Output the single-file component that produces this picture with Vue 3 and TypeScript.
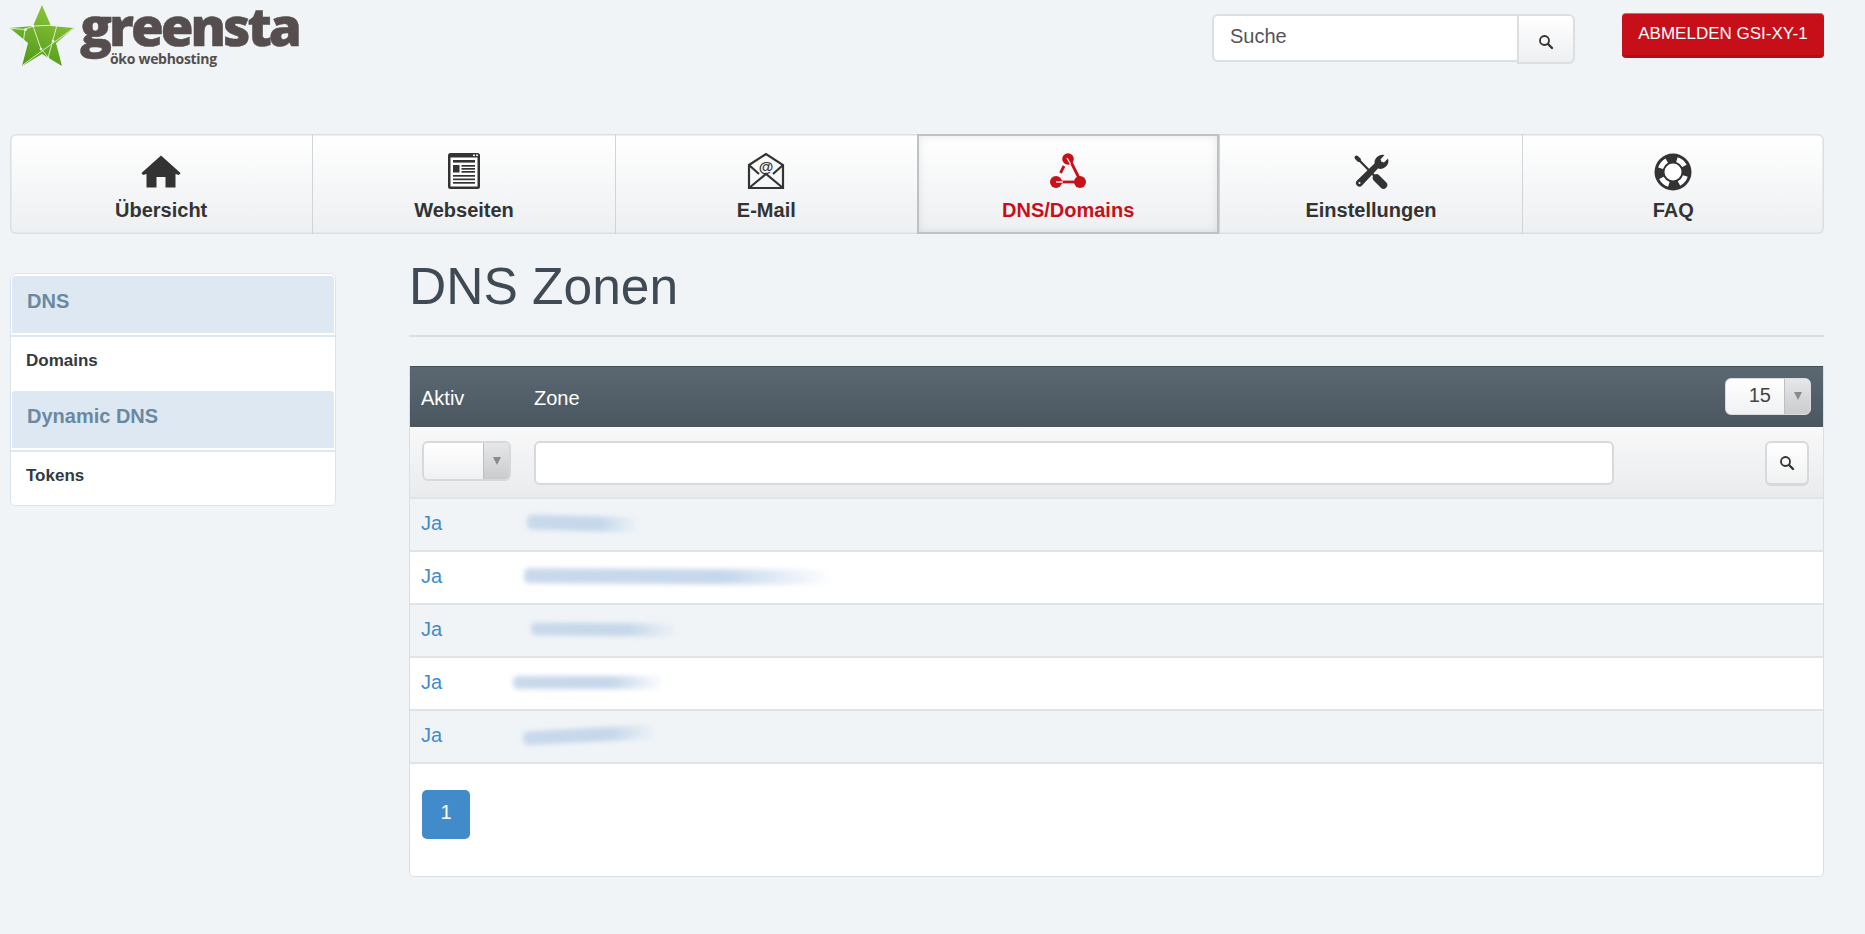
<script setup lang="ts">
const tabs = [
  { key: 'home', label: 'Übersicht' },
  { key: 'web', label: 'Webseiten' },
  { key: 'mail', label: 'E-Mail' },
  { key: 'dns', label: 'DNS/Domains', active: true },
  { key: 'tools', label: 'Einstellungen' },
  { key: 'faq', label: 'FAQ' },
]
const rows = [
  { left: -7, width: 112, height: 15, rot: 1.5 },
  { left: -10, width: 308, height: 15, rot: 0.3 },
  { left: -3, width: 148, height: 13, rot: 0.5 },
  { left: -21, width: 152, height: 13, rot: 0 },
  { left: -11, width: 134, height: 14, rot: -3 },
]
</script>

<template>
  <div class="page">
    <header class="topbar">
      <div class="logo">
        <svg class="star" width="64" height="62" viewBox="0 0 64 62">
          <defs>
            <linearGradient id="starfill" x1="0.7" y1="0" x2="0.3" y2="1">
              <stop offset="0" stop-color="#8fc63c" />
              <stop offset="1" stop-color="#4f9a18" />
            </linearGradient>
          </defs>
          <polygon points="32,0 41,21 64,23 46,38 52,61 32,49 12,61 18,38 0,23 23,21" fill="url(#starfill)" />
          <g stroke="#e8f3d8" stroke-width="0.9" fill="none">
            <path d="M1 23.5 L15 24.5 L23 21 L47 20" />
            <path d="M63 23.5 L12 60.5" />
            <path d="M23 21 L31 44 L45 60" />
            <path d="M15 24.5 L11 54" />
            <path d="M47 20 L38 53" />
          </g>
          <g fill="#fff">
            <circle cx="15.500" cy="24.500" r="1.300" />
            <circle cx="23" cy="21" r="1.300" />
            <circle cx="31" cy="44" r="1.300" />
            <circle cx="43" cy="36" r="1.300" />
          </g>
        </svg>
        <div class="wordmark">
          <div class="brand">greensta</div>
          <div class="tagline">öko webhosting</div>
        </div>
      </div>
      <div class="top-actions">
        <div class="search">
          <div class="search-input">Suche</div>
          <button class="search-btn">
            <svg width="16" height="16" viewBox="0 0 16 16"><circle cx="6.500" cy="6.500" r="4.500" fill="none" stroke="#333" stroke-width="1.800" /><path d="M10 10 L14 14" stroke="#333" stroke-width="2.400" stroke-linecap="round" /></svg>
          </button>
        </div>
        <button class="logout">ABMELDEN GSI-XY-1</button>
      </div>
    </header>

    <nav class="tabs">
      <a v-for="t in tabs" :key="t.key" class="tab" :class="{ active: t.active }">
        <svg class="tab-icon" width="40" height="40" viewBox="0 0 40 40">
          <template v-if="t.key === 'home'">
            <path d="M20 3.500 L39.500 21 L38 23 L34.500 22 V35.500 H24.500 V25 H15.500 V35.500 H5.500 V22 L2 23 L0.500 21 Z" fill="#333" />
          </template>
          <template v-else-if="t.key === 'web'">
            <rect x="4" y="1" width="32" height="36" rx="2.500" fill="#333" />
            <rect x="6.500" y="5.500" width="27" height="29" fill="#fff" />
            <circle cx="30" cy="3.300" r="1" fill="#fff" />
            <circle cx="33" cy="3.300" r="1" fill="#fff" />
            <g fill="#333">
              <rect x="9" y="8" width="22" height="2.600" />
              <rect x="9" y="13" width="6.500" height="7.500" />
              <rect x="17.500" y="13" width="13.500" height="1.700" />
              <rect x="17.500" y="16" width="13.500" height="1.700" />
              <rect x="17.500" y="19" width="13.500" height="1.700" />
              <rect x="9" y="23" width="22" height="1.700" />
              <rect x="9" y="26.500" width="22" height="1.700" />
              <rect x="9" y="30" width="22" height="1.700" />
            </g>
          </template>
          <template v-else-if="t.key === 'mail'">
            <g fill="none" stroke="#333" stroke-width="2.200">
              <path d="M3 13 L20 2 L37 13 V36 H3 Z" />
              <path d="M3 13 L13 22 M37 13 L27 22 M3 36 L20 22 L37 36" />
            </g>
            <text x="20" y="20" text-anchor="middle" class="at">@</text>
          </template>
          <template v-else-if="t.key === 'dns'">
            <g fill="none" stroke="#c8101a" stroke-width="2.800">
              <path d="M16 14 L12.500 21" />
              <path d="M23 10 L31 26" />
              <path d="M11 30 L30 30" />
            </g>
            <circle cx="20" cy="7" r="5.800" fill="#c8101a" />
            <circle cx="8" cy="30" r="6" fill="#c8101a" />
            <circle cx="32" cy="30" r="6" fill="#c8101a" />
            <path d="M19 6 L22.500 12" stroke="#fff" stroke-width="1.300" />
            <path d="M8 30 H15" stroke="#fff" stroke-width="1.300" />
          </template>
          <template v-else-if="t.key === 'tools'">
            <g fill="none" stroke="#333" stroke-linecap="round">
              <path d="M5.500 5.500 L8 8" stroke-width="4" />
              <path d="M8 8 L23.500 24" stroke-width="2.300" />
              <path d="M25.500 26 L32.500 33" stroke-width="7.500" />
            </g>
            <path d="M33.500 3 L29.500 7.500 L30.500 9.800 L33 10.500 L37 6.500 A8 8 0 0 1 27 16.500 L11 33.500 A3.500 3.500 0 0 1 6 28.500 L23.500 11.500 A8 8 0 0 1 33.500 3 Z" fill="#333" />
            <circle cx="8.500" cy="31" r="1" fill="#fff" />
          </template>
          <template v-else>
            <circle cx="20" cy="20" r="18.500" fill="#333" />
            <circle cx="20" cy="20" r="13" fill="none" stroke="#fff" stroke-width="5" stroke-dasharray="10 10.420" transform="rotate(-135 20 20) rotate(-28 20 20)" />
            <circle cx="20" cy="20" r="8.500" fill="#fff" />
          </template>
        </svg>
        <span class="tab-label">{{ t.label }}</span>
      </a>
    </nav>

    <div class="content">
      <aside class="sidebar">
        <div class="side-head">DNS</div>
        <div class="side-item">Domains</div>
        <div class="side-head">Dynamic DNS</div>
        <div class="side-item last">Tokens</div>
      </aside>

      <main class="main">
        <h1 class="title">DNS Zonen</h1>
        <section class="table">
          <div class="thead">
            <div class="col-a">Aktiv</div>
            <div class="col-b">Zone</div>
            <div class="select page-size">
              <span class="select-value">15</span>
              <span class="select-arrow"><i class="tri"></i></span>
            </div>
          </div>
          <div class="filter">
            <div class="col-a">
              <div class="select active-filter">
                <span class="select-value"></span>
                <span class="select-arrow"><i class="tri"></i></span>
              </div>
            </div>
            <div class="filter-input"></div>
            <button class="filter-btn">
              <svg width="16" height="16" viewBox="0 0 16 16"><circle cx="6.500" cy="6.500" r="4.500" fill="none" stroke="#333" stroke-width="1.800" /><path d="M10 10 L14 14" stroke="#333" stroke-width="2.400" stroke-linecap="round" /></svg>
            </button>
          </div>
          <div v-for="(r, i) in rows" :key="i" class="row" :class="{ odd: i % 2 === 0 }">
            <div class="col-a link">Ja</div>
            <div class="col-b">
              <span class="smear" :style="{ marginLeft: r.left + 'px', width: r.width + 'px', height: r.height + 'px', transform: `rotate(${r.rot}deg)` }"></span>
            </div>
          </div>
          <div class="pager">
            <span class="page-btn">1</span>
          </div>
        </section>
      </main>
    </div>
  </div>
</template>

<style>
html, body { background: #f0f4f7; margin: 0; }
</style>

<style scoped>
.page {
  padding: 0 41px 0 10px;
  font-family: "Liberation Sans", Arial, sans-serif;
  color: #333;
  box-sizing: border-box;
}
.topbar {
  height: 134px;
  display: flex;
  justify-content: space-between;
  align-items: flex-start;
}
.logo {
  display: flex;
  align-items: flex-start;
  padding-top: 5px;
  gap: 6px;
}
.wordmark { width: 240px; height: 64px; }
.brand {
  font-family: "Open Sans", sans-serif;
  font-weight: 800;
  font-size: 53px;
  line-height: 50px;
  letter-spacing: -3px;
  color: #564e4e;
  -webkit-text-stroke: 0.5px #564e4e;
  margin-top: -4px;
}
.tagline {
  font-family: "Open Sans", sans-serif;
  font-weight: 700;
  font-size: 14px;
  line-height: 16px;
  letter-spacing: -0.3px;
  color: #564e4e;
  margin: 0 0 0 30px;
}
.top-actions {
  display: flex;
  align-items: flex-start;
  gap: 47px;
  padding-top: 13px;
}
.search { display: flex; align-items: flex-start; margin-top: 1px; }
.search-input {
  width: 305px;
  height: 48px;
  box-sizing: border-box;
  padding: 7px 0 0 16px;
  background: #fff;
  border: 2px solid #dcdfe1;
  border-right: 0;
  border-radius: 6px 0 0 6px;
  font-size: 20px;
  line-height: 26px;
  color: #555;
}
.search-btn {
  width: 58px;
  height: 50px;
  box-sizing: border-box;
  padding: 8px 0 0;
  background: linear-gradient(#fff, #eeeff1);
  border: 2px solid #dcdfe1;
  border-radius: 0 6px 6px 0;
}
.logout {
  width: 202px;
  height: 45px;
  padding: 0 0 1px;
  background: #c60f19;
  border: 0;
  border-bottom: 3px solid #b30d16;
  border-top: 1px solid #e46068;
  border-radius: 4px;
  color: #fff;
  font-family: inherit;
  font-size: 17px;
  box-sizing: border-box;
}
.tabs {
  display: flex;
  height: 100px;
  box-sizing: border-box;
  background: linear-gradient(#fff, #edeff1);
  box-shadow: inset 0 0 0 1.500px #dcdfe1;
  border-radius: 6px;
}
.tab {
  flex: none;
  width: calc(100% / 6);
  box-sizing: border-box;
  display: flex;
  flex-direction: column;
  align-items: center;
  padding-top: 18px;
  border-left: 1px solid #d2d5d7;
  color: #333;
}
.tab:first-child { border-left: 0; }
.tab.active {
  border: 2px solid #bfc2c5;
  box-shadow: inset 0 0 10px rgba(0, 0, 0, 0.09);
  color: #c8101a;
  padding-top: 16px;
}
.tab-icon { display: block; }
.tab-label {
  font-size: 20px;
  font-weight: 700;
  line-height: 24px;
  margin-top: 6px;
}
.at { font: 700 15px "Liberation Sans", sans-serif; fill: #333; }
.content {
  display: flex;
  gap: 73px;
  margin-top: 39px;
  align-items: flex-start;
}
.sidebar {
  width: 326px;
  flex: none;
  box-sizing: border-box;
  background: #fff;
  border: 1px solid #d9e4f1;
  border-radius: 6px;
  overflow: hidden;
  padding-top: 2px;
}
.side-head {
  height: 57px;
  box-sizing: border-box;
  margin: 0 1px;
  padding: 13px 0 0 15px;
  background: #dee8f3;
  color: #6b88a1;
  font-size: 20px;
  font-weight: 700;
  line-height: 24px;
  border-radius: 3px 3px 0 0;
}
.side-item {
  height: 56px;
  box-sizing: border-box;
  margin-top: 2px;
  border-top: 2px solid #dee8f3;
  padding: 12px 0 0 15px;
  background: #fff;
  color: #33393f;
  font-size: 17px;
  font-weight: 700;
  line-height: 24px;
}
.side-item.last { height: 55px; }
.main { flex: 1; min-width: 0; }
.title {
  margin: 0;
  height: 62px;
  border-bottom: 2px solid #dcdfe1;
  font-size: 51.500px;
  font-weight: 400;
  line-height: 26px;
  color: #3f4a54;
}
.table {
  margin-top: 29px;
  background: #fff;
  border: 1px solid #dcdfe1;
  border-top: 0;
  border-radius: 0 0 5px 5px;
  height: 511px;
  box-sizing: border-box;
}
.thead {
  height: 62px;
  box-sizing: border-box;
  display: flex;
  align-items: center;
  background: linear-gradient(#5b6871, #4b5760);
  border-top: 1px solid #454f56;
  border-bottom: 1px solid #fff;
  color: #fff;
  font-size: 20px;
  padding-top: 3px;
}
.col-a { width: 124px; flex: none; padding-left: 11px; box-sizing: border-box; }
.col-b { flex: 1; min-width: 0; }
.select {
  display: flex;
  height: 37px;
  box-sizing: border-box;
  border: 1px solid #d9dbdd;
  border-radius: 6px;
  overflow: hidden;
  background: linear-gradient(#fff, #f0f1f2);
}
.select-value {
  flex: 1;
  text-align: right;
  padding-right: 13px;
  font-size: 20px;
  line-height: 33px;
  color: #444;
}
.select-arrow {
  width: 25px;
  border-left: 1px solid #bdbfc1;
  background: linear-gradient(#e6e7e8, #c9cbcd);
  display: flex;
  align-items: center;
  justify-content: center;
}
.tri {
  width: 0;
  height: 0;
  border-left: 4.500px solid transparent;
  border-right: 4.500px solid transparent;
  border-top: 8px solid #8a8a8a;
}
.page-size { width: 86px; margin: -5px 12px 0 0; }
.filter {
  height: 71px;
  box-sizing: border-box;
  display: flex;
  align-items: flex-start;
  background: linear-gradient(#f8f8f9, #e9ebed);
  border-bottom: 2px solid #e1e3e5;
  padding-top: 13px;
}
.active-filter { width: 89px; height: 40px; margin-left: 1px; border-width: 2px; border-color: #d7d9db; }
.filter-input {
  width: 1080px;
  height: 44px;
  box-sizing: border-box;
  background: #fff;
  border: 2px solid #d7d9db;
  border-radius: 6px;
}
.filter-btn {
  width: 44px;
  height: 45px;
  margin: 0 14px 0 auto;
  box-sizing: border-box;
  padding: 2px 0 0;
  background: linear-gradient(#fff, #f0f1f2);
  border: 2px solid #d7d9db;
  border-bottom-width: 3px;
  border-radius: 6px;
}
.row {
  height: 53px;
  box-sizing: border-box;
  display: flex;
  align-items: center;
  background: #fff;
  border-bottom: 2px solid #e1e4e7;
  font-size: 20px;
  padding-bottom: 3px;
}
.row.odd { background: #f0f4f7; }
.link { color: #428bca; }
.smear {
  display: block;
  background: linear-gradient(90deg, #c9d9eb 0%, #c5d7ea 65%, rgba(197, 215, 234, 0) 100%);
  filter: blur(2.500px);
  border-radius: 5px;
}
.pager { padding: 26px 0 0 12px; }
.page-btn {
  display: block;
  width: 48px;
  height: 49px;
  border-radius: 5px;
  background: #428bca;
  color: #fff;
  text-align: center;
  font-size: 20px;
  line-height: 44px;
}
</style>
